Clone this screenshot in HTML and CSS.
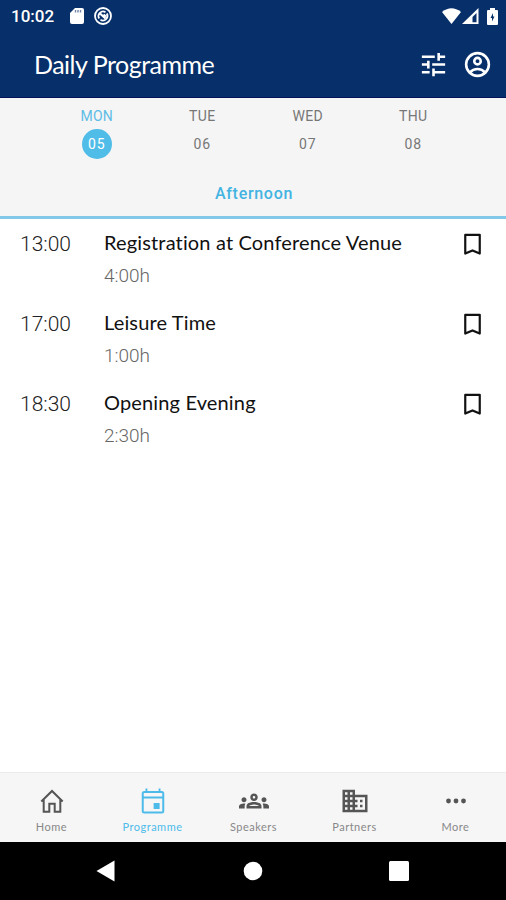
FILE: index.html
```html
<!DOCTYPE html>
<html lang="en">
<head>
  <meta charset="UTF-8">
  <title>Daily Programme</title>
  <meta name="viewport" content="width=device-width, initial-scale=1">
  <link rel="stylesheet" href="styles.css">
</head>
<body>

<header class="header">
  <div class="status-bar">
    <span class="clock">10:02</span>
    <svg class="sd-card" width="14" height="16" viewBox="0 0 14 16"><path fill="#fff" d="M5 0h7q2 0 2 2v12q0 2-2 2H2q-2 0-2-2V5z"/><path stroke="#7187aa" stroke-width="1.4" d="M5.5 2v2.5M8 2v2.5M10.5 2v2.5"/></svg>
    <svg class="sync" width="18" height="18" viewBox="0 0 18 18" fill="none" stroke="#fff"><circle cx="9" cy="9" r="8" stroke-width="1.8"/><path stroke-width="1.8" d="M5.200 11.500A4.600 4.600 0 0 1 11.500 5.200M12.800 6.500A4.600 4.600 0 0 1 6.500 12.800"/><path stroke-width="2.200" d="M6 6.500l5.500 5M9.500 7.500l2.500 2"/></svg>
    <div class="status-right">
      <svg width="19" height="16" viewBox="0 0 19 16"><path fill="#fff" d="M9.500 16L0 4Q9.500-3.500 19 4z"/></svg>
      <svg width="17" height="16" viewBox="0 0 17 16"><path fill="#fff" fill-rule="evenodd" d="M0 16L16.500 0v16zM10.500 14.200h4V5L10.500 9z"/></svg>
      <svg class="battery" width="11" height="17" viewBox="0 0 11 17"><path fill="#fff" d="M3 0h5v2h2q1 0 1 1v13q0 1-1 1H1q-1 0-1-1V3q0-1 1-1h2z"/><path fill="#072f69" d="M6 5L3.500 10H5v3.500L7.500 8.500H6z"/></svg>
    </div>
  </div>
  <div class="toolbar">
    <h1>Daily Programme</h1>
    <div class="actions">
      <svg width="31" height="31" viewBox="0 0 24 24" fill="#fff"><path d="M3 17v2h6v-2H3zM3 5v2h10V5H3zm10 16v-2h8v-2h-8v-2h-2v6h2zM7 9v2H3v2h4v2h2V9H7zm14 4v-2H11v2h10zm-6-4h2V7h4V5h-4V3h-2v6z"/></svg>
      <svg width="31" height="31" viewBox="0 0 24 24" fill="none" stroke="#fff" stroke-width="2"><circle cx="12" cy="12" r="8.800"/><circle cx="12" cy="9.400" r="2.500"/><path d="M6 18.200q2.500-2.700 6-2.700t6 2.700"/></svg>
    </div>
  </div>
</header>

<section class="filters">
  <div class="days">
    <div class="day active"><span>MON</span><span class="date">05</span></div>
    <div class="day"><span>TUE</span><span class="date">06</span></div>
    <div class="day"><span>WED</span><span class="date">07</span></div>
    <div class="day"><span>THU</span><span class="date">08</span></div>
  </div>
  <div class="period">Afternoon</div>
</section>

<main class="programme">
  <div class="event">
    <div class="time">13:00</div>
    <div class="info">
      <div class="title">Registration at Conference Venue</div>
      <div class="duration">4:00h</div>
    </div>
    <svg class="bookmark" width="29" height="29" viewBox="0 0 24 24"><path d="M6 4h12v15.500l-6-2.600-6 2.600z"/></svg>
  </div>
  <div class="event">
    <div class="time">17:00</div>
    <div class="info">
      <div class="title">Leisure Time</div>
      <div class="duration">1:00h</div>
    </div>
    <svg class="bookmark" width="29" height="29" viewBox="0 0 24 24"><path d="M6 4h12v15.500l-6-2.600-6 2.600z"/></svg>
  </div>
  <div class="event">
    <div class="time">18:30</div>
    <div class="info">
      <div class="title">Opening Evening</div>
      <div class="duration">2:30h</div>
    </div>
    <svg class="bookmark" width="29" height="29" viewBox="0 0 24 24"><path d="M6 4h12v15.500l-6-2.600-6 2.600z"/></svg>
  </div>
</main>

<nav class="tabs">
  <div class="tab">
    <svg width="30" height="30" viewBox="0 0 30 30" fill="none" stroke="currentColor" stroke-width="2"><path d="M4.300 15.500L15 5l10.700 10.500M6.700 13.500v12.200h5.600v-8h5.400v8h5.600V13.500"/></svg>
    <span>Home</span>
  </div>
  <div class="tab active">
    <svg width="30" height="30" viewBox="0 0 24 24" fill="currentColor"><path d="M19 4h-1V2h-1.500v2h-9V2H6v2H5a2 2 0 0 0-2 2v14a2 2 0 0 0 2 2h14a2 2 0 0 0 2-2V6a2 2 0 0 0-2-2zm.4 16.400H4.600V10h14.800zm0-12H4.600V5.600h14.800zM12.500 13.500h4.800v4.800h-4.800z"/></svg>
    <span>Programme</span>
  </div>
  <div class="tab">
    <svg width="30" height="30" viewBox="0 0 24 24" fill="currentColor"><path d="M4 13c1.100 0 2-.9 2-2s-.9-2-2-2-2 .9-2 2 .9 2 2 2zm1.130 1.100C4.760 14.040 4.390 14 4 14c-.99 0-1.930.21-2.780.58C.48 14.900 0 15.620 0 16.430V18h4.500v-1.610c0-.83.23-1.610.63-2.290zM20 13c1.100 0 2-.9 2-2s-.9-2-2-2-2 .9-2 2 .9 2 2 2zm4 3.430c0-.81-.48-1.530-1.220-1.850C21.930 14.210 20.990 14 20 14c-.39 0-.76.04-1.130.1.400.68.630 1.460.63 2.290V18H24zM16.240 13.650C15.070 13.130 13.630 12.750 12 12.750s-3.070.39-4.240.9C6.680 14.130 6 15.210 6 16.390V18h12v-1.610c0-1.180-.68-2.260-1.760-2.740zM8.070 16c.09-.23.130-.39.910-.69.970-.38 1.990-.56 3.020-.56s2.050.18 3.020.56c.77.300.81.460.91.690zM12 8c.55 0 1 .45 1 1s-.45 1-1 1-1-.45-1-1 .45-1 1-1m0-2c-1.660 0-3 1.340-3 3s1.340 3 3 3 3-1.340 3-3-1.340-3-3-3z"/></svg>
    <span>Speakers</span>
  </div>
  <div class="tab">
    <svg width="30" height="30" viewBox="0 0 24 24" fill="currentColor"><path d="M12 7V3H2v18h20V7H12zM6 19H4v-2h2v2zm0-4H4v-2h2v2zm0-4H4V9h2v2zm0-4H4V5h2v2zm4 12H8v-2h2v2zm0-4H8v-2h2v2zm0-4H8V9h2v2zm0-4H8V5h2v2zm10 12h-8v-2h2v-2h-2v-2h2v-2h-2V9h8v10zm-2-8h-2v2h2v-2zm0 4h-2v2h2v-2z"/></svg>
    <span>Partners</span>
  </div>
  <div class="tab">
    <svg width="30" height="30" viewBox="0 0 30 30" fill="currentColor"><circle cx="7.500" cy="15" r="2.400"/><circle cx="15" cy="15" r="2.400"/><circle cx="22.500" cy="15" r="2.400"/></svg>
    <span>More</span>
  </div>
</nav>

<div class="system-nav">
  <svg width="20" height="22" viewBox="0 0 20 22"><path fill="#fff" d="M18.500.5v21L.5 11z"/></svg>
  <svg width="20" height="20" viewBox="0 0 20 20"><circle cx="10" cy="10" r="9.300" fill="#fff"/></svg>
  <svg width="20" height="20" viewBox="0 0 20 20"><rect width="20" height="20" rx="1.500" fill="#fff"/></svg>
</div>

</body>
</html>
```
FILE: styles.css
```css
* {
  box-sizing: border-box;
}

body {
  margin: 0;
  height: 900px;
  display: flex;
  flex-direction: column;
  background-color: #fff;
  font-family: Roboto, sans-serif;
}

svg {
  display: block;
  flex-shrink: 0;
}

/* Header */
.header {
  height: 98px;
  background-color: #072f69;
  border-bottom: 1px solid #04145a;
  color: #fff;
}

.status-bar {
  height: 32px;
  display: flex;
  align-items: center;
  padding: 0 8px 0 11px;
}

.clock {
  width: 59px;
  font-size: 17px;
  font-weight: 500;
}

.sync {
  margin-left: 10px;
}

.status-right {
  display: flex;
  align-items: center;
  gap: 1px;
  margin-left: auto;
}

.battery {
  margin-left: 7px;
}

.toolbar {
  height: 66px;
  display: flex;
  align-items: center;
  justify-content: space-between;
  padding: 0 13px 2px 34px;
}

.toolbar h1 {
  margin: 0;
  font-family: Lato, sans-serif;
  font-size: 25px;
  font-weight: 400;
  letter-spacing: -0.5px;
}

.actions {
  display: flex;
  gap: 13px;
}

/* Day and time filters */
.filters {
  height: 121px;
  background-color: #f5f5f5;
  border-bottom: 3px solid #82c8e8;
}

.days {
  display: flex;
  padding: 9px 40px 0 44px;
}

.day {
  flex: 1;
  display: flex;
  flex-direction: column;
  align-items: center;
  color: #777;
  font-size: 14px;
  line-height: 18px;
  letter-spacing: 0.3px;
}

.date {
  width: 30px;
  height: 30px;
  margin-top: 4px;
  border-radius: 50%;
  text-align: center;
  line-height: 31px;
  letter-spacing: 0.8px;
}

.day.active {
  color: #5ebce6;
}

.day.active .date {
  background-color: #50bce8;
  color: #fff;
}

.period {
  margin-top: 24px;
  padding-left: 2px;
  color: #43b4e2;
  font-size: 16px;
  font-weight: 500;
  line-height: 22px;
  letter-spacing: 0.7px;
  text-align: center;
}

/* Events */
.programme {
  flex: 1;
}

.event {
  height: 80px;
  display: flex;
  padding: 11px 19px 0 20px;
}

.time {
  width: 84px;
  color: #222;
  font-size: 21px;
  font-weight: 300;
  line-height: 29px;
}

.info {
  flex: 1;
}

.title {
  color: #111;
  font-family: Lato, sans-serif;
  font-size: 20px;
  line-height: 24px;
  letter-spacing: 0.15px;
  white-space: nowrap;
}

.duration {
  margin-top: 10px;
  color: #666;
  font-size: 19px;
  font-weight: 300;
  line-height: 24px;
}

.bookmark {
  fill: none;
  stroke: #111;
  stroke-width: 1.8;
  stroke-linejoin: round;
}

/* Bottom tabs */
.tabs {
  height: 70px;
  display: flex;
  padding-left: 1px;
  background-color: #f6f6f6;
  border-top: 1px solid #ebebeb;
}

.tab {
  flex: 1;
  display: flex;
  flex-direction: column;
  align-items: center;
  padding-top: 13px;
  color: #555;
}

.tab span {
  margin-top: 3px;
  color: #888;
  font-family: Lato, sans-serif;
  font-size: 11px;
  line-height: 16px;
  letter-spacing: 0.5px;
}

.tab.active,
.tab.active span {
  color: #4dbbea;
}

/* Android navigation */
.system-nav {
  height: 58px;
  display: flex;
  align-items: center;
  justify-content: space-between;
  padding: 0 97px 0 96px;
  background-color: #000;
}
```
